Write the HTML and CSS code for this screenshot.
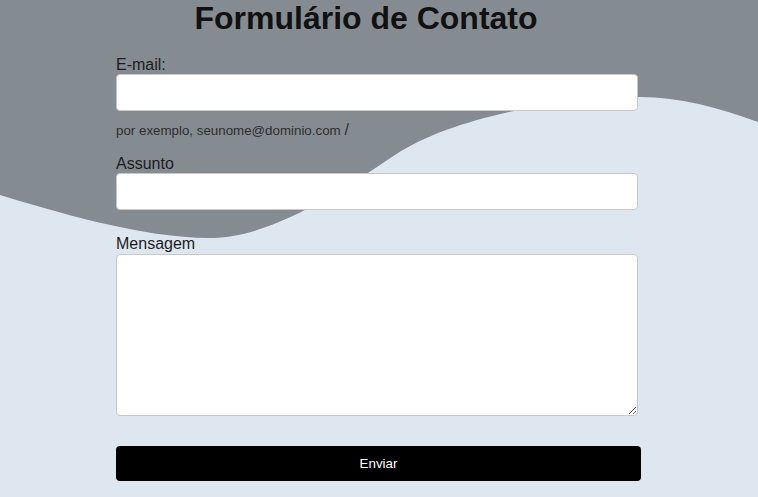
FILE: index.html
```html
<!DOCTYPE html>
<html lang="pt-BR">
<head>
<meta charset="utf-8">
<title>Formulário de Contato</title>
<link rel="stylesheet" href="styles.css">
</head>
<body>
<div class="page">
  <svg class="wave" viewBox="0 0 758 497" width="758" height="497" aria-hidden="true">
    <path d="M0,0 H758 V122 C720,108 680,97 640,97 C560,97 450,118 395,155 C340,192 270,238 210,238 C140,238 50,210 0,195 Z" fill="#848c92"/>
  </svg>
  <main class="container">
    <h1 class="title">Formulário de Contato</h1>
    <form class="form">
      <label class="label label-first" for="email">E-mail:</label>
      <input class="input" type="email" id="email">
      <p class="hint">por exemplo, seunome@dominio.com <span class="slash">/</span></p>
      <label class="label label-subject" for="assunto">Assunto</label>
      <input class="input" type="text" id="assunto">
      <label class="label label-message" for="mensagem">Mensagem</label>
      <textarea class="textarea" id="mensagem"></textarea>
      <button class="submit" type="submit">Enviar</button>
    </form>
  </main>
</div>
</body>
</html>
```
FILE: styles.css
```css
html, body {
  margin: 0;
  padding: 0;
}
body {
  font-family: "Liberation Sans", Arial, sans-serif;
  background: #dee7f0;
  color: #1a1a1a;
}
.page {
  position: relative;
  width: 758px;
  height: 497px;
  overflow: hidden;
  background: #dee7f0;
}
.wave {
  position: absolute;
  top: 0;
  left: 0;
  z-index: 0;
  display: block;
}
.container {
  position: relative;
  z-index: 1;
  width: 500px;
  margin-left: 116px;
}
.title {
  margin: 0 0 19px;
  font-size: 32px;
  font-weight: bold;
  color: #111;
  text-align: center;
  line-height: normal;
}
.form {
  display: flex;
  flex-direction: column;
  align-items: flex-start;
}
.label {
  display: block;
  font-size: 16px;
  line-height: 18.4px;
  color: #1c1c1c;
}
.label-subject {
  margin-top: 14px;
}
.label-message {
  margin-top: 25px;
}
.input {
  box-sizing: border-box;
  width: 522px;
  height: 37px;
  margin: 0;
  padding: 0 10px;
  border: 1px solid #c9c9c9;
  border-radius: 4px;
  background: #fff;
  font-family: inherit;
  font-size: 16px;
}
.hint {
  margin: 10px 0 0;
  font-size: 13.33px;
  line-height: 18.4px;
  color: #2e2e2e;
}
.slash {
  font-size: 16px;
}
.textarea {
  box-sizing: border-box;
  display: block;
  width: 522px;
  height: 162px;
  margin: 0;
  padding: 10px;
  border: 1px solid #c9c9c9;
  border-radius: 4px;
  background: #fff;
  font-family: inherit;
  font-size: 16px;
}
.submit {
  box-sizing: border-box;
  width: 525px;
  height: 35px;
  margin-top: 30px;
  border: none;
  border-radius: 4px;
  background: #000;
  color: #fff;
  font-family: inherit;
  font-size: 13.33px;
  cursor: pointer;
}
```
